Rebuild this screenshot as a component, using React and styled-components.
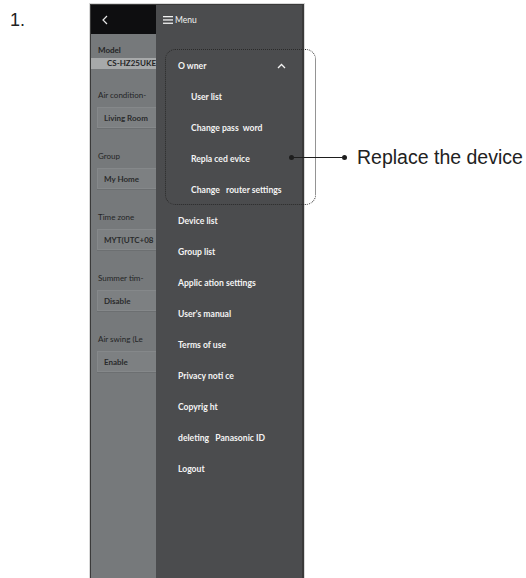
import styled, { createGlobalStyle } from "styled-components";

const GlobalStyle = createGlobalStyle`
  html, body {
    margin: 0;
    padding: 0;
    background: #fff;
  }
`;

const Page = styled.div`
  position: relative;
  display: flex;
  align-items: flex-start;
  width: 526px;
  height: 578px;
  overflow: hidden;
  font-family: "Lato", "Open Sans", sans-serif;
`;

const StepNumber = styled.div`
  width: 80px;
  padding: 10px 0 0 10px;
  font-family: "Liberation Sans", Arial, sans-serif;
  font-size: 18px;
  color: #222;
`;

const Phone = styled.div`
  display: flex;
  width: 211px;
  height: 590px;
  margin-top: 4px;
  border: 1px solid #3a3a3a;
  border-right-width: 2px;
  box-shadow: 0 0 0 1px #d8d8d8;
`;

const LeftPanel = styled.div`
  width: 65px;
  flex-shrink: 0;
  display: flex;
  flex-direction: column;
  background: #76797b;
  overflow: hidden;
`;

const TopBar = styled.div`
  height: 29px;
  flex-shrink: 0;
  display: flex;
  align-items: center;
  padding-left: ${(p) => p.$pad || 0}px;
  background: ${(p) => p.$bg};
  color: #fff;
`;

const Settings = styled.div`
  display: flex;
  flex-direction: column;
  padding-top: 10px;
`;

const FieldLabel = styled.div`
  height: 12px;
  line-height: 12px;
  padding-left: 7px;
  font-size: 8px;
  font-weight: ${(p) => (p.$bold ? 700 : 400)};
  color: #242526;
  white-space: nowrap;
`;

const ModelBand = styled.div`
  height: 11px;
  line-height: 11px;
  margin-top: 2px;
  margin-bottom: 20px;
  padding-left: 16px;
  background: #a7a9aa;
  font-size: 8px;
  font-weight: 700;
  color: #242526;
  white-space: nowrap;
`;

const Field = styled.div`
  display: flex;
  flex-direction: column;
  gap: 6px;
  margin-bottom: 22px;
`;

const ValueBox = styled.div`
  height: 21px;
  line-height: 21px;
  margin-left: 6px;
  padding-left: 6px;
  background: #7d8082;
  border: 1px solid #85888a;
  border-right: none;
  box-sizing: border-box;
  font-size: 8px;
  font-weight: 700;
  color: #2a2b2c;
  white-space: nowrap;
  box-shadow: 0 1px 0 #6c6f71;
`;

const MenuPanel = styled.div`
  flex: 1;
  display: flex;
  flex-direction: column;
  background: #4b4c4e;
`;

const MenuTitle = styled.span`
  margin-left: 2px;
  font-size: 8.5px;
  color: #f2f2f2;
`;

const MenuList = styled.div`
  display: flex;
  flex-direction: column;
  padding-top: 16px;
`;

const MenuItem = styled.div`
  display: flex;
  align-items: center;
  justify-content: space-between;
  height: 31px;
  padding-left: ${(p) => (p.$sub ? 35 : 22)}px;
  padding-right: 16px;
  font-size: 8.6px;
  font-weight: 700;
  color: #f4f4f4;
  white-space: pre;
`;

const Bracket = styled.div`
  position: absolute;
  left: 165px;
  top: 49px;
  width: 151px;
  height: 156px;
  box-sizing: border-box;
  border: 1px dotted #2a2a2a;
  border-radius: 10px;
  pointer-events: none;
`;

const Callout = styled.div`
  position: absolute;
  left: 289px;
  top: 146px;
  display: flex;
  align-items: center;
  height: 22px;
`;

const Dot = styled.span`
  width: 5px;
  height: 5px;
  border-radius: 50%;
  background: #1e1e1e;
`;

const Leader = styled.span`
  width: 48px;
  height: 1px;
  background: #1e1e1e;
`;

const CalloutText = styled.span`
  margin-left: 10px;
  font-family: "Liberation Sans", Arial, sans-serif;
  font-size: 19.5px;
  color: #222;
  white-space: nowrap;
`;

const BackIcon = () => (
  <svg width="8" height="10" viewBox="0 0 8 10">
    <polyline points="6,1 2,5 6,9" fill="none" stroke="#e8e8e8" strokeWidth="1.2" />
  </svg>
);

const Hamburger = () => (
  <svg width="10" height="8" viewBox="0 0 10 8">
    <rect x="0" y="0" width="10" height="1.3" fill="#f2f2f2" />
    <rect x="0" y="3.3" width="10" height="1.3" fill="#f2f2f2" />
    <rect x="0" y="6.6" width="10" height="1.3" fill="#f2f2f2" />
  </svg>
);

const Caret = () => (
  <svg width="9" height="6" viewBox="0 0 9 6">
    <polyline points="1,5 4.5,1.5 8,5" fill="none" stroke="#f4f4f4" strokeWidth="1.3" />
  </svg>
);

const fields = [
  { label: "Air condition-", value: "Living Room" },
  { label: "Group", value: "My Home" },
  { label: "Time zone", value: "MYT(UTC+08" },
  { label: "Summer tim-", value: "Disable" },
  { label: "Air swing (Le", value: "Enable" },
];

const ownerItems = ["User list", "Change pass  word", "Repla ced evice", "Change   router settings"];

const menuItems = [
  "Device list",
  "Group list",
  "Applic ation settings",
  "User's manual",
  "Terms of use",
  "Privacy noti ce",
  "Copyrig ht",
  "deleting   Panasonic ID",
  "Logout",
];

export default function App() {
  return (
    <Page>
      <GlobalStyle />
      <StepNumber>1.</StepNumber>
      <Phone>
        <LeftPanel>
          <TopBar $bg="#0e0e10" $pad={10}>
            <BackIcon />
          </TopBar>
          <Settings>
            <FieldLabel $bold>Model</FieldLabel>
            <ModelBand>CS-HZ25UKE</ModelBand>
            {fields.map((f) => (
              <Field key={f.label}>
                <FieldLabel>{f.label}</FieldLabel>
                <ValueBox>{f.value}</ValueBox>
              </Field>
            ))}
          </Settings>
        </LeftPanel>
        <MenuPanel>
          <TopBar $bg="#4b4c4e" $pad={7}>
            <Hamburger />
            <MenuTitle>Menu</MenuTitle>
          </TopBar>
          <MenuList>
            <MenuItem>
              O wner
              <Caret />
            </MenuItem>
            {ownerItems.map((t) => (
              <MenuItem key={t} $sub>
                {t}
              </MenuItem>
            ))}
            {menuItems.map((t) => (
              <MenuItem key={t}>{t}</MenuItem>
            ))}
          </MenuList>
        </MenuPanel>
      </Phone>
      <Bracket />
      <Callout>
        <Dot />
        <Leader />
        <Dot />
        <CalloutText>Replace the device</CalloutText>
      </Callout>
    </Page>
  );
}
